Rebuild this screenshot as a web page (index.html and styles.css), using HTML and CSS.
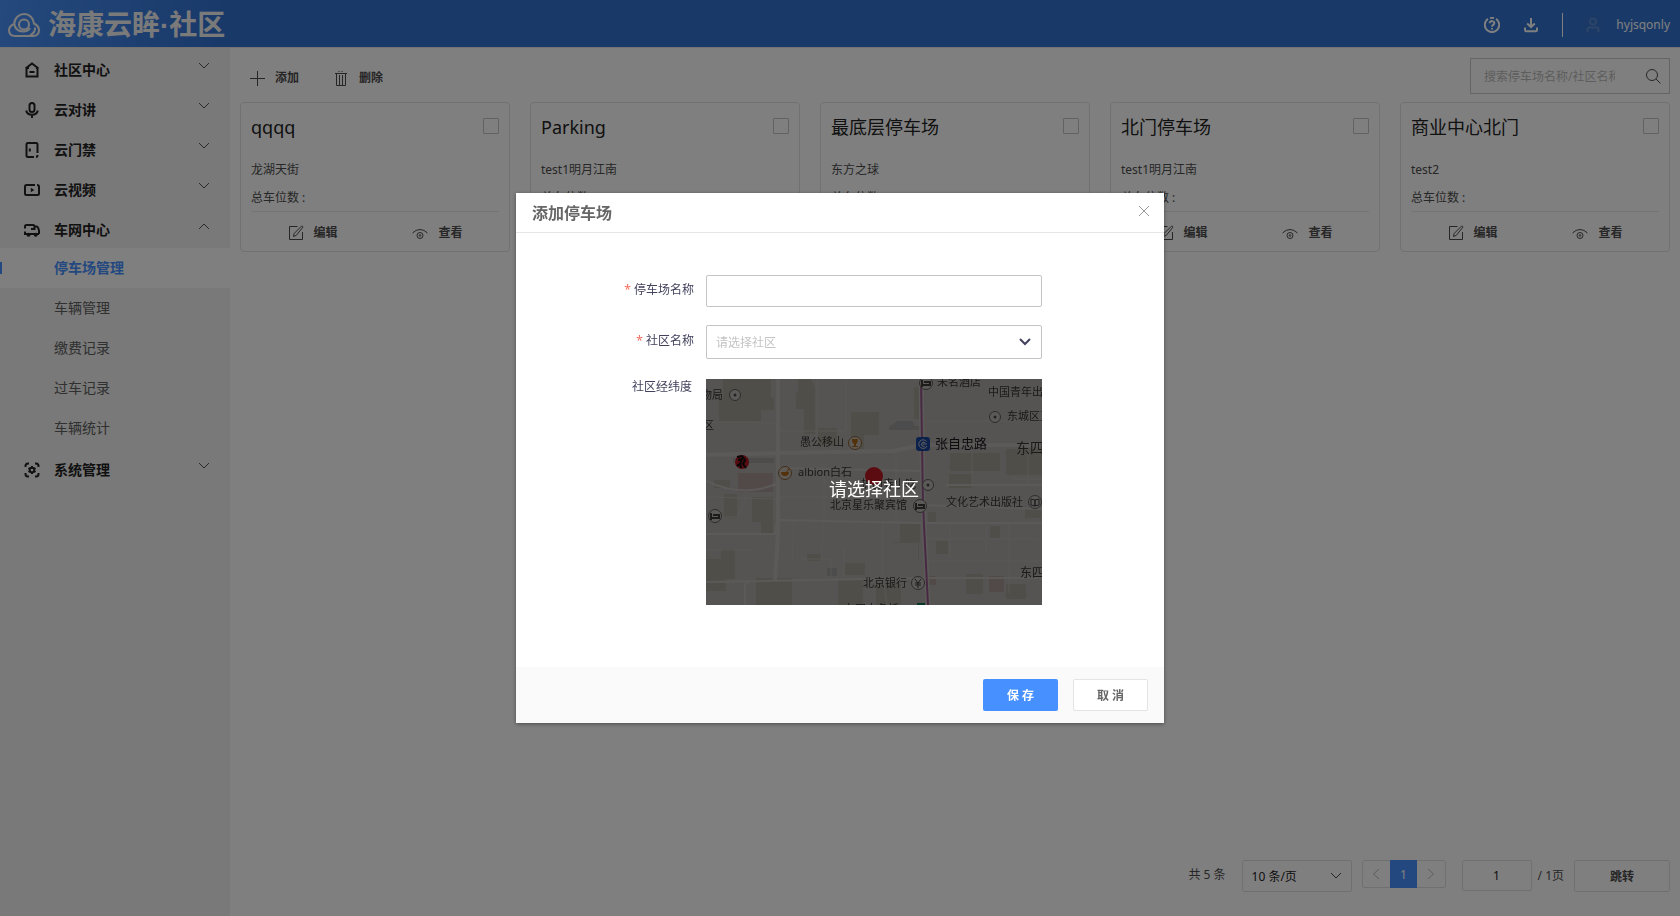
FILE: index.html
```html
<!DOCTYPE html>
<html lang="zh-CN">
<head>
<meta charset="utf-8">
<title>海康云眸·社区</title>
<link rel="stylesheet" href="styles.css">
</head>
<body>
<svg class="sprite" aria-hidden="true">
  <symbol id="down" viewBox="0 0 12 8"><path d="M1 1l5 5 5-5"/></symbol>
  <symbol id="up" viewBox="0 0 12 8"><path d="M1 7l5-5 5 5"/></symbol>
  <symbol id="edit" viewBox="0 0 16 16"><path d="M9.500 1.500h-8v13h13V7M5.500 11.500l.6-3 7.200-7.200q.7-.6 1.300 0t0 1.300L8.300 10.300z"/></symbol>
  <symbol id="eye" viewBox="0 0 18 16"><path d="M1.500 8Q5 4.500 9 4.500T16.500 8"/><circle cx="9" cy="10.500" r="3"/><circle cx="9" cy="10.500" r=".8"/></symbol>
</svg>
<div class="app">
  <header class="topbar">
    <div class="brand">
      <svg class="brand-mark" viewBox="0 0 32 24" width="32" height="24"><path d="M7 23C3 23 1 20.500 1 17.300q0-4.300 5.200-6.300C6.500 5 11 1 16.200 1c5.300 0 9.300 4 9.800 9.500q5 2.500 5 6.800c0 3.200-2 5.700-6 5.700zM6.300 11q1 7 8.700 7.500 5 0 7-3.500M27 14.500q.5 5-5 8"/><circle cx="16" cy="11.500" r="5"/></svg>
      <h1>海康云眸<span class="dot">·</span>社区</h1>
    </div>
    <div class="user">
      <button class="plain" aria-label="帮助"><svg width="16" height="16" viewBox="0 0 16 16"><path d="M4 1.900A7.200 7.200 0 1 0 12 1.900M6 1.100a7 7 0 0 1 4 0M5.700 6.300C5.700 3.300 10.500 3.500 10.300 6.300 10.200 7.900 8 7.900 8 9.800M8 11v1.600"/></svg></button>
      <button class="plain" aria-label="下载"><svg width="16" height="16" viewBox="0 0 16 16"><path d="M8 1v9M4.200 6.500L8 10.200l3.800-3.700M2 10.500V13q0 1.200 1.200 1.200h9.600Q14 14.200 14 13v-2.500"/></svg></button>
      <span class="rule"></span>
      <span class="avatar"><svg width="16" height="16" viewBox="0 0 16 16"><circle cx="8" cy="4.500" r="3"/><path d="M2.500 15v-3q0-1.500 1.500-1.500h8q1.500 0 1.500 1.500v3"/></svg></span>
      <span class="name">hyjsqonly</span>
    </div>
  </header>
  <div class="body">
    <nav class="side">
      <button class="menu"><svg class="mi" viewBox="0 0 16 16"><path d="M5 6H2.500v8.500h11V6H12M1.500 6.500L8 1.500l6.500 5M5.500 10h5"/></svg><span>社区中心</span><svg class="arrow"><use href="#down"/></svg></button>
      <button class="menu"><svg class="mi" viewBox="0 0 16 16"><rect x="5.500" y="1" width="5" height="9" rx="2.500"/><path d="M2.200 8.500q.8 4.200 5.800 4.200t5.800-4.200M8 13v3"/></svg><span>云对讲</span><svg class="arrow"><use href="#down"/></svg></button>
      <button class="menu"><svg class="mi" viewBox="0 0 16 16"><path d="M13.500 11V2.500q0-1.500-1.500-1.500H4Q2.500 1 2.500 2.500v11Q2.500 15 4 15h6M12 15q1.500 0 1.500-2M5.800 6.500v3"/></svg><span>云门禁</span><svg class="arrow"><use href="#down"/></svg></button>
      <button class="menu"><svg class="mi" viewBox="0 0 16 16"><path d="M11 3H2.500Q1 3 1 4.500v7Q1 13 2.500 13h11q1.500 0 1.500-1.500v-7Q15 3 13 3"/><path class="solid" d="M6.800 5.700v4.600L10.300 8z"/></svg><span>云视频</span><svg class="arrow"><use href="#down"/></svg></button>
      <button class="menu"><svg class="mi" viewBox="0 0 16 16"><path d="M1 6.500V4.500Q1 3 2.500 3H9q1.500 0 1.500 1.500V7H7M10.500 4.500h2q1 0 1.700 1.500L15 8.500V12M1 9.500V12h14"/><circle class="solid" cx="4.500" cy="12.800" r="2"/><circle class="solid" cx="11.700" cy="12.800" r="2"/></svg><span>车网中心</span><svg class="arrow"><use href="#up"/></svg></button>
      <div class="submenu">
        <a class="active" href="#">停车场管理</a>
        <a href="#">车辆管理</a>
        <a href="#">缴费记录</a>
        <a href="#">过车记录</a>
        <a href="#">车辆统计</a>
      </div>
      <button class="menu"><svg class="mi" viewBox="0 0 16 16"><path d="M1.500 5V4q0-2.500 2.500-2.500h1M11 1.500h1q2.500 0 2.500 2.500v1M14.500 11v1q0 2.500-2.500 2.500h-1M5 14.500H4q-2.500 0-2.500-2.500v-1M8 4v1.500M8 10.500V12M4.500 6l1.500.9M10 9.100l1.500.9M4.500 10L6 9.100M10 6.900l1.500-.9"/><circle cx="8" cy="8" r="2.300"/></svg><span>系统管理</span><svg class="arrow"><use href="#down"/></svg></button>
    </nav>
    <main class="content">
      <div class="toolbar">
        <button class="tool"><svg class="line" width="16" height="16" viewBox="0 0 16 16"><path d="M8.500 1v15M1 8.500h15"/></svg>添加</button>
        <button class="tool"><svg class="line" width="16" height="16" viewBox="0 0 16 16"><path d="M2 3.500h12M3.500 3.500v12h9v-12M6.500 5v10M9.500 5v10M5.500 1.500h1M8.500 1.500h1"/></svg>删除</button>
        <div class="search"><input type="text" aria-label="搜索" placeholder="搜索停车场名称/社区名称"><button class="plain" aria-label="查找"><svg class="line" width="16" height="16" viewBox="0 0 16 16"><circle cx="7" cy="7" r="5.500"/><path d="M11 11l4.500 4.500"/></svg></button></div>
      </div>
      <div class="cards">
        <article class="card"><div class="card-head"><h2>qqqq</h2><input type="checkbox" aria-label="qqqq"></div><p>龙湖天街</p><p>总车位数 :</p><div class="actions"><button><svg class="line" width="16" height="16"><use href="#edit"/></svg>编辑</button><button><svg class="line" width="18" height="16"><use href="#eye"/></svg>查看</button></div></article>
        <article class="card"><div class="card-head"><h2>Parking</h2><input type="checkbox" aria-label="Parking"></div><p>test1明月江南</p><p>总车位数 :</p><div class="actions"><button><svg class="line" width="16" height="16"><use href="#edit"/></svg>编辑</button><button><svg class="line" width="18" height="16"><use href="#eye"/></svg>查看</button></div></article>
        <article class="card"><div class="card-head"><h2>最底层停车场</h2><input type="checkbox" aria-label="最底层停车场"></div><p>东方之球</p><p>总车位数 :</p><div class="actions"><button><svg class="line" width="16" height="16"><use href="#edit"/></svg>编辑</button><button><svg class="line" width="18" height="16"><use href="#eye"/></svg>查看</button></div></article>
        <article class="card"><div class="card-head"><h2>北门停车场</h2><input type="checkbox" aria-label="北门停车场"></div><p>test1明月江南</p><p>总车位数 :</p><div class="actions"><button><svg class="line" width="16" height="16"><use href="#edit"/></svg>编辑</button><button><svg class="line" width="18" height="16"><use href="#eye"/></svg>查看</button></div></article>
        <article class="card"><div class="card-head"><h2>商业中心北门</h2><input type="checkbox" aria-label="商业中心北门"></div><p>test2</p><p>总车位数 :</p><div class="actions"><button><svg class="line" width="16" height="16"><use href="#edit"/></svg>编辑</button><button><svg class="line" width="18" height="16"><use href="#eye"/></svg>查看</button></div></article>
      </div>
      <div class="pagination">
        <span class="total">共 5 条</span>
        <div class="select size"><select aria-label="每页条数"><option>10 条/页</option></select><svg class="arrow"><use href="#down"/></svg></div>
        <div class="pager">
          <button aria-label="上一页"><svg width="8" height="12" viewBox="0 0 8 12"><path d="M7 1L1.500 6 7 11"/></svg></button>
          <button class="current">1</button>
          <button aria-label="下一页"><svg width="8" height="12" viewBox="0 0 8 12"><path d="M1 1l5.500 5L1 11"/></svg></button>
        </div>
        <input class="goto" type="text" aria-label="页码" value="1">
        <span class="pages">/ 1页</span>
        <button class="jump">跳转</button>
      </div>
    </main>
  </div>
</div>

<div class="mask">
  <section class="dialog" role="dialog" aria-modal="true" aria-labelledby="dialog-title">
    <header class="dialog-head">
      <h2 id="dialog-title">添加停车场</h2>
      <button class="plain close" aria-label="关闭"><svg width="12" height="12" viewBox="0 0 12 12"><path d="M1 1l10 10M11 1L1 11"/></svg></button>
    </header>
    <form class="form">
      <label class="required" for="lot">停车场名称</label>
      <input class="field" id="lot" type="text">
      <label class="required" for="community">社区名称</label>
      <div class="select community"><select id="community"><option>请选择社区</option></select><svg class="arrow" viewBox="0 0 12 8"><path d="M1 1l5 5 5-5"/></svg></div>
      <span class="label">社区经纬度</span>
      <div class="map">
        <svg viewBox="0 0 336 226" preserveAspectRatio="xMidYMid slice">
          <rect class="land" width="336" height="226"/>
          <g class="block">
            <path d="M17 0h48v18l3 1v12H55v11H13V20h4zM92 0h13l4 8v47H98V30h-8V14l2-2zM145 33h28v23h-15v14h-13zM112 49h19v18h-19zM208 8h9v32h-9zM244 74h50v18h-50zM300 70h36v26h-36zM8 101h16v8H8zM18 115h13v24H18zM46 118h21v37H55v-12H46zM15 170h14v30H15zM0 180h20v32H0zM50 199h36v27H50zM194 145h20v18h-27v18h25v-18h-18zM187 164h26v17h-26zM101 175h15v7h-15zM139 184h20v12h-20zM132 201h25v25h-25zM170 205h25v21h-25zM243 95h23v14h-23zM284 147h10v12h-10zM230 162h12v13h-12zM260 195h17v20h-17zM300 205h20v15h-20zM222 133h8v10h-8zM319 130h16v9h-16z"/>
          </g>
          <path class="water" d="M183 48l8-6h15l3 5h7v4h-33zM27 79h41v5H27zM121 189h10v8h-10z"/>
          <path class="pink" d="M32 94h35v19H32zM283 197h15v16h-15zM222 197h8v9h-8z"/>
          <g class="street">
            <path d="M0 43l70 1M70 52h70V0M111 0v66M0 118l70 2M70 118h145M0 138h32l8-20M40 155h28M118 82v58l-3 42M177 144v52l4 30M88 143l-2 40M0 171h45M244 144v35M266 68v38M280 148v25M303 144v70M322 65v42M222 160h110M218 42h118M306 100h30M95 180h30v18M216 182h120M138 170v28M190 70v72"/>
          </g>
          <g class="road">
            <path class="main" d="M72 0v156l-3 45M0 76l72-2 115-2 29-6h120"/>
            <path d="M0 155h69l2-14 145 3h120M0 203l216-4h120M39 226v-20l4-4M72 89l142 3M0 102q38 18 72 2M216 126l120 4M240 106h96"/>
          </g>
          <path class="metro-bg" d="M215 0l2 126 5 100"/>
          <path class="metro" d="M215 0l2 126 5 100"/>
          <g class="poi">
            <circle cx="29" cy="16" r="5.500"/><circle cx="289" cy="38" r="5.500"/><circle cx="222" cy="106" r="5.500"/>
            <circle cx="220" cy="4" r="6.500"/><circle cx="9" cy="137" r="6.500"/><circle cx="214" cy="127" r="6.500"/><circle cx="329" cy="123" r="6.500"/><circle cx="212" cy="204" r="6.500"/>
            <path class="bed" d="M216 1v7M216 6h8V3h-6M5 134v7M5 139h8v-3H7M210 124v7M210 129h8v-3h-6"/>
            <path d="M325 120l4 1v6l-4-1zM333 120l-4 1v6l4-1zM209 200l3 4 3-4M212 204v5M209 204h6M209 206h6"/>
          </g>
          <g class="pin"><circle cx="29" cy="16" r="1.500"/><circle cx="289" cy="38" r="1.500"/><circle cx="222" cy="106" r="1.500"/></g>
          <g class="food"><circle cx="149" cy="64" r="6.500"/><circle cx="79" cy="94" r="6.500"/><path class="cup" d="M146 60h6q0 4-2 5v2h2v1h-6v-1h2v-2q-2-1-2-5zM75 93h8q0 4-4 4t-4-4zM80 93l3-4 1 1-3 3z"/></g>
          <rect class="station" x="210" y="58" width="14" height="14" rx="3"/>
          <path class="station-mark" d="M220.500 62.500A4.300 4.300 0 1 0 221 67M221 65h-4.500M219 63.500q-3-1-3.500 1.500t3 2.500"/>
          <rect class="station-green" x="211" y="224" width="8" height="2"/>
          <circle class="brand-red" cx="36" cy="83" r="7"/><path class="brand-dark" d="M31 78l5-1 3 4-2 4 3 4M32 81l4-1-2 5 1 4M31 87l4-3"/>
          <g class="names">
            <text x="-5" y="20">物局</text><text x="-3" y="50">区</text><text x="231" y="7">未名酒店</text><text x="282" y="17">中国青年出版社</text><text x="301" y="41">东城区卫</text>
            <text x="94" y="67">愚公移山</text><text x="92" y="97">albion白石</text><text x="155" y="109">护国寺小吃</text><text x="124" y="130">北京星乐聚宾馆</text><text x="240" y="127">文化艺术出版社</text><text x="157" y="208">北京银行</text><text x="138" y="234">东四十条桥</text>
            <text class="strong" x="229" y="69">张自忠路</text><text class="big" x="310" y="74">东四十</text><text class="mid" x="314" y="198">东四</text>
          </g>
          <circle class="marker" cx="168" cy="97" r="9"/>
        </svg>
        <div class="map-cover">请选择社区</div>
      </div>
    </form>
    <footer class="dialog-foot">
      <button class="save">保 存</button>
      <button class="cancel">取 消</button>
    </footer>
  </section>
</div>
</body>
</html>
```

FILE: styles.css
```css
* { box-sizing: border-box; }
body {
  margin: 0;
  font: 12px/20px "Noto Sans", "Noto Sans CJK SC", sans-serif;
  color: #4d4d4d;
}
h1, h2, p { margin: 0; font-weight: 400; }
button, input, select { font: inherit; color: inherit; margin: 0; }
button { background: none; border: 0; padding: 0; cursor: pointer; }
svg { flex: none; fill: none; stroke: currentColor; }
.sprite { position: absolute; width: 0; height: 0; }
.plain { display: flex; }
.app { min-height: 100vh; display: flex; flex-direction: column; }

.topbar {
  height: 48px;
  padding: 2px 10px 0 8px;
  display: flex;
  align-items: center;
  justify-content: space-between;
  color: #fff;
  background: linear-gradient(100deg, #4b92fb 0, #3274d3 220px);
  border-bottom: 1px solid #e6e6e6;
}
.brand { display: flex; align-items: center; gap: 8px; color: #f4f4f4; }
.brand-mark { stroke-width: 2; }
.brand h1 { font: 700 28px/40px "Noto Sans CJK SC", sans-serif; }
.dot { font-family: "Liberation Sans", sans-serif; }
.user { display: flex; align-items: center; }
.user svg { stroke-width: 2; }
.user .plain { margin-right: 23px; }
.user .plain + .rule { width: 1px; height: 24px; background: #fff; margin-right: 18px; }
.avatar {
  width: 24px; height: 24px; margin-right: 11px;
  border-radius: 50%;
  display: flex; align-items: center; justify-content: center;
  background: #3472cd;
  color: #5789cf;
}

.body { flex: 1; display: flex; }
.side { width: 230px; flex: none; background: #f2f2f2; padding-top: 2px; }
.menu {
  width: 100%; height: 40px;
  padding: 0 20px 0 24px;
  display: flex; align-items: center;
  font-size: 14px; font-weight: 700; color: #222;
  text-align: left;
}
.menu span { flex: 1; }
.mi { width: 16px; height: 16px; margin-right: 14px; stroke-width: 2; }
.solid { fill: currentColor; stroke: none; }
.arrow { width: 12px; height: 8px; stroke-width: 1; }
.menu .arrow { margin-bottom: 8px; color: #555; }
.submenu { margin: -2px 0 2px; }
.submenu a {
  display: block; height: 40px;
  padding-left: 54px;
  font-size: 14px; line-height: 40px;
  color: #606060; text-decoration: none;
}
.submenu .active {
  color: #4691ff; font-weight: 700;
  background: linear-gradient(#4691ff, #4691ff) 0 center / 2px 12px no-repeat #fff;
}

.content { flex: 1; min-width: 0; padding: 10px; display: flex; flex-direction: column; }
.toolbar { display: flex; align-items: center; height: 36px; margin-bottom: 8px; padding-left: 9px; gap: 34px; }
.line { stroke-width: 1; }
.tool { display: flex; align-items: center; gap: 10px; padding-top: 3px; font-weight: 700; }
.search {
  width: 200px; height: 36px; margin-left: auto;
  padding: 0 8px 0 13px;
  display: flex; align-items: center; justify-content: space-between;
  border: 1px solid #c8c8c8;
}
.search input { width: 131px; border: 0; padding: 2px 0 0; outline: 0; background: none; }
.search input::placeholder { color: #bbb; }

.cards { display: grid; grid-template-columns: repeat(5, 1fr); gap: 20px; }
.card { padding: 13px 10px 0; height: 150px; border: 1px solid #e2e2e2; border-radius: 4px; }
.card-head { display: flex; justify-content: space-between; align-items: flex-start; margin-bottom: 22px; }
.card h2 { font-size: 18px; line-height: 22px; color: #222; }
.card input { appearance: none; width: 16px; height: 16px; margin: 2px 0 0; border: 1px solid #c4c4c4; border-radius: 1px; }
.card p { margin-bottom: 8px; }
.card p + p { margin-bottom: 3px; }
.actions { display: grid; grid-template-columns: 1fr 1fr; border-top: 1px solid #e9e9e9; height: 42px; }
.actions button { display: flex; align-items: center; justify-content: center; gap: 9px; font-weight: 700; }

.pagination { margin-top: auto; display: flex; align-items: flex-start; padding-bottom: 14px; line-height: 28px; }
.total { margin-left: auto; margin-right: 16px; padding-top: 1px; }
.select { position: relative; }
.select select {
  appearance: none; width: 100%; height: 100%;
  padding: 1px 30px 0 9px;
  border: 1px solid #e0e0e0; border-radius: 2px;
  background: #fff; color: #222;
}
.select .arrow { position: absolute; right: 10px; top: 50%; margin-top: -4px; pointer-events: none; }
.size { width: 110px; height: 32px; margin-right: 10px; }
.pager { display: flex; width: 84px; height: 28px; margin-right: 16px; border: 1px solid #e0e0e0; border-radius: 2px; }
.pager button { flex: 1; display: flex; align-items: center; justify-content: center; color: #bbb; }
.pager .current { background: #4691ff; color: #fff; margin: -1px 0; padding-top: 2px; }
.goto { width: 70px; height: 31px; margin-right: 6px; padding: 0; text-align: center; color: #222; border: 1px solid #e0e0e0; border-radius: 2px; }
.pages { line-height: 32px; margin-right: 10px; }
.jump { width: 96px; height: 32px; padding-top: 1px; border: 1px solid #e0e0e0; border-radius: 2px; font-weight: 700; }

.mask {
  position: fixed; inset: 0;
  display: flex; align-items: center; justify-content: center;
  background: rgba(0, 0, 0, .5);
}
.dialog { width: 648px; background: #fff; box-shadow: 0 1px 4px rgba(0, 0, 0, .4); }
.dialog-head {
  height: 40px; padding: 0 14px 0 16px;
  display: flex; align-items: center; justify-content: space-between;
  border-bottom: 1px solid #e6e6e6;
}
.dialog-head h2 { font-size: 16px; line-height: 24px; font-weight: 700; color: #666; }
.close { color: #999; margin-bottom: 4px; }
.form {
  display: grid; grid-template-columns: 178px 336px;
  column-gap: 12px; row-gap: 18px;
  padding: 42px 0 62px 0;
}
.form label, .label { text-align: right; line-height: 30px; color: #43425d; }
.form label[for="community"] { line-height: 32px; }
.label { line-height: 20px; padding-right: 2px; }
.required::before { content: "* "; color: #f56c5c; }
.field, .community select { border: 1px solid #c4c4c4; border-radius: 2px; }
.field { height: 32px; padding: 0 10px; }
.community { height: 34px; }
.community select { color: #c4c4c4; }
.community .arrow { color: #43425d; stroke-width: 2; right: 11px; }
.map { position: relative; height: 226px; margin-top: 2px; overflow: hidden; }
.map svg { display: block; width: 100%; height: 100%; stroke: none; }
.map-cover {
  position: absolute; inset: 0;
  display: flex; align-items: center; justify-content: center;
  padding-bottom: 6px;
  font-size: 18px; color: #fff;
  background: rgba(0, 0, 0, .6);
}
.land { fill: #d5d2cd; }
.block { fill: #c7c3b3; }
.water { fill: #bdbdbf; }
.pink { fill: #ccb9b6; }
.street { fill: none; stroke: #dedbd6; stroke-width: 1; }
.road { fill: none; stroke: #e4e1dd; stroke-width: 2; }
.road .main { stroke-width: 4; }
.metro-bg { fill: none; stroke: #e4e1dd; stroke-width: 5; }
.metro { fill: none; stroke: #b566a8; stroke-width: 2; }
.poi { fill: #e4e0dc; stroke: #716d6a; stroke-width: 1; }
.poi path { fill: none; stroke: #4a4644; }
.poi .bed { stroke-width: 2; }
.pin { fill: #5c5956; }
.food { fill: #e8e0d6; stroke: #a0703c; }
.food .cup { fill: #d07c1c; stroke: none; }
.station { fill: #1e55bd; }
.station-mark { fill: none; stroke: #eee; stroke-width: 1; }
.station-green { fill: #168a68; }
.brand-red { fill: #d51c28; }
.brand-dark { fill: none; stroke: #111; stroke-width: 2; }
.names { font-size: 11px; fill: #45423f; }
.names .strong { font-size: 13px; fill: #1c1c24; }
.names .big { font-size: 14px; }
.names .mid { font-size: 12px; }
.marker { fill: #e3202c; }
.dialog-foot {
  height: 56px; padding-right: 16px;
  display: flex; align-items: center; justify-content: flex-end; gap: 15px;
  background: #fafafa;
}
.dialog-foot button { width: 75px; height: 32px; padding-top: 1px; border-radius: 2px; font-weight: 700; }
.save { background: #4691ff; color: #fff; }
.cancel { background: #fff; border: 1px solid #e4e4e4; color: #666; }
```
